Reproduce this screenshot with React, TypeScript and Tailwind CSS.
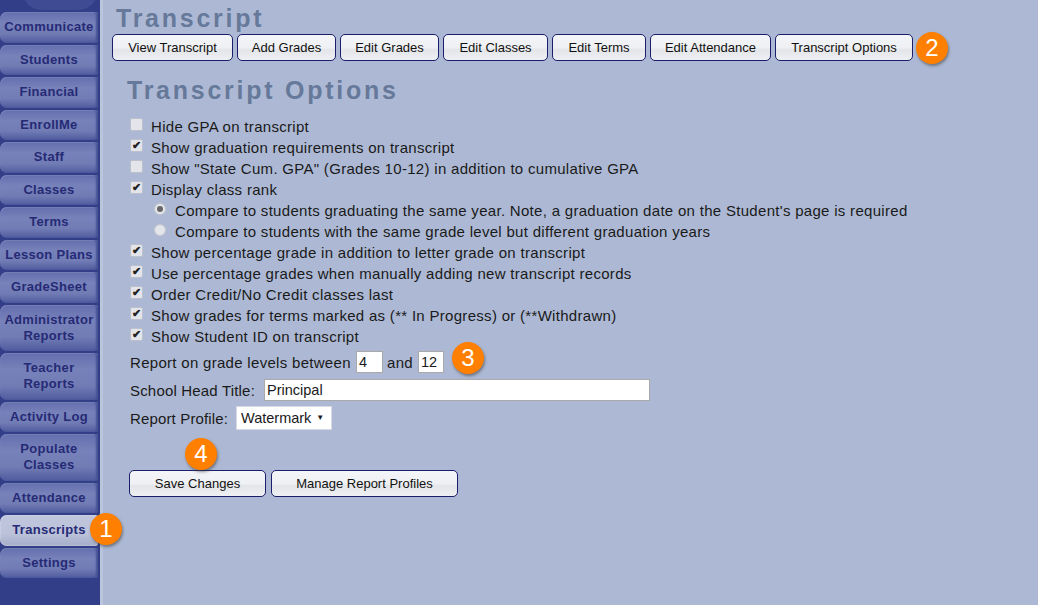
const sideItems: { label: string[]; active?: boolean }[] = [
  { label: ["Communicate"] },
  { label: ["Students"] },
  { label: ["Financial"] },
  { label: ["EnrollMe"] },
  { label: ["Staff"] },
  { label: ["Classes"] },
  { label: ["Terms"] },
  { label: ["Lesson Plans"] },
  { label: ["GradeSheet"] },
  { label: ["Administrator", "Reports"] },
  { label: ["Teacher", "Reports"] },
  { label: ["Activity Log"] },
  { label: ["Populate", "Classes"] },
  { label: ["Attendance"] },
  { label: ["Transcripts"], active: true },
  { label: ["Settings"] },
];

const tabs: [string, string][] = [
  ["View Transcript", "w-[121px]"],
  ["Add Grades", "w-[99px]"],
  ["Edit Grades", "w-[99px]"],
  ["Edit Classes", "w-[105px]"],
  ["Edit Terms", "w-[94px]"],
  ["Edit Attendance", "w-[121px]"],
  ["Transcript Options", "w-[138px]"],
];

function Badge({ n, className }: { n: string; className: string }) {
  return (
    <span
      className={`absolute flex h-[32px] w-[32px] items-center justify-center rounded-full bg-[#ff7f00] text-[24px] leading-none text-white shadow-[1px_2px_3px_rgba(60,60,60,0.55)] ${className}`}
    >
      {n}
    </span>
  );
}

function Btn({ label, className }: { label: string; className: string }) {
  return (
    <button
      className={`h-[27px] rounded-[5px] border border-[#1b1f6b] bg-[linear-gradient(#f4f5f8_0%,#eff0f3_50%,#e3e5e8_60%,#eff0f3_100%)] text-center text-[13px] leading-none text-[#111] ${className}`}
    >
      {label}
    </button>
  );
}

function Check({ on, label }: { on?: boolean; label: string }) {
  return (
    <div className="flex h-[21px] items-center">
      <span className="flex h-[13px] w-[13px] -translate-y-[2px] items-center justify-center rounded-[2px] border border-[#bcc1cc] bg-[#e3e5ea] text-[11px] font-bold leading-none text-[#222]">
        {on ? "✔" : ""}
      </span>
      <span className="ml-[8px]">{label}</span>
    </div>
  );
}

function Radio({ on, label }: { on?: boolean; label: string }) {
  return (
    <div className="flex h-[21px] items-center pl-[24px]">
      <span className="flex h-[12px] w-[12px] -translate-y-[2px] items-center justify-center rounded-full border border-[#c4c8d0] bg-[#e3e5ea]">
        {on ? <span className="h-[6px] w-[6px] rounded-full bg-[#666]" /> : null}
      </span>
      <span className="ml-[9px]">{label}</span>
    </div>
  );
}

export default function App() {
  return (
    <div className="relative flex h-[605px] w-[1038px] overflow-hidden bg-[#adb9d4] font-['Liberation_Sans',Arial,sans-serif]">
      <aside className="relative h-full w-[100px] shrink-0 bg-[#323e87] pt-[12px] pr-[2px]">
        <div className="absolute left-[22px] top-[-30px] h-[40px] w-[76px] rounded-full bg-[#3f4b92]" />
        <div className="relative flex flex-col">
          {sideItems.map((it) => (
            <div
              key={it.label[0]}
              className={`mb-[2px] flex flex-col items-center justify-center rounded-l-[7px] rounded-r-[3px] text-center text-[13px] font-bold leading-[16px] tracking-[0.3px] text-[#262a75] ${
                it.label.length > 1 ? "h-[46.5px]" : "h-[30.5px]"
              } ${
                it.active
                  ? "bg-[linear-gradient(#c0c6dc_0%,#bbc2da_60%,#a5acc9_100%)] shadow-[inset_0_0_2px_#e5e8f2]"
                  : "bg-[linear-gradient(#636eae_0%,#7782ba_35%,#717cb5_70%,#4f5b9e_100%)] shadow-[inset_-2px_0_2px_#465194,inset_0_1px_1px_#8791c3]"
              }`}
            >
              {it.label.map((l) => (
                <span key={l}>{l}</span>
              ))}
            </div>
          ))}
        </div>
      </aside>

      <main className="relative flex-1 border-l-[3px] border-l-[#bac4da] pl-[9px] text-[15px] leading-[21px] tracking-[0.3px] text-[#1a1a1a]">
        <h1 className="mt-[3px] h-[31px] pl-[4px] text-[25px] font-bold leading-[31px] tracking-[2.75px] text-[#66799a]">
          Transcript
        </h1>
        <div className="flex gap-[4px] tracking-normal">
          {tabs.map(([t, w]) => (
            <Btn key={t} label={t} className={w} />
          ))}
        </div>

        <h2 className="mt-[13px] h-[32px] pl-[15px] text-[25px] font-bold leading-[32px] tracking-[2.75px] text-[#66799a]">
          Transcript Options
        </h2>

        <div className="mt-[10px] pl-[18px]">
          <Check label="Hide GPA on transcript" />
          <Check on label="Show graduation requirements on transcript" />
          <Check label={'Show "State Cum. GPA" (Grades 10-12) in addition to cumulative GPA'} />
          <Check on label="Display class rank" />
          <Radio on label="Compare to students graduating the same year. Note, a graduation date on the Student's page is required" />
          <Radio label="Compare to students with the same grade level but different graduation years" />
          <Check on label="Show percentage grade in addition to letter grade on transcript" />
          <Check on label="Use percentage grades when manually adding new transcript records" />
          <Check on label="Order Credit/No Credit classes last" />
          <Check on label="Show grades for terms marked as (** In Progress) or (**Withdrawn)" />
          <Check on label="Show Student ID on transcript" />

          <div className="mt-[4px] flex h-[22px] items-center">
            <span className="w-[226px]">Report on grade levels between</span>
            <span className="flex h-[22px] w-[27px] items-center border border-[#a9a9a9] bg-white pl-[2px] text-[14.5px] tracking-normal">4</span>
            <span className="ml-[4px] w-[31px]">and</span>
            <span className="flex h-[22px] w-[26px] items-center border border-[#a9a9a9] bg-white pl-[2px] text-[14.5px] tracking-normal">12</span>
          </div>
          <div className="mt-[6px] flex h-[22px] items-center">
            <span className="w-[134px] tracking-[0.18px]">School Head Title:</span>
            <span className="flex h-[22px] w-[386px] items-center border border-[#a9a9a9] bg-white pl-[2px] text-[14.5px] tracking-normal">Principal</span>
          </div>
          <div className="mt-[5px] flex h-[24px] items-center">
            <span className="w-[106px] tracking-[0.15px]">Report Profile:</span>
            <span className="flex h-[24px] w-[96px] items-center border border-[#d5d9e3] bg-white pl-[4px] text-[14.5px] tracking-normal">
              Watermark
              <span className="ml-[5px] text-[8px] leading-none">▼</span>
            </span>
          </div>
          <div className="ml-[-1px] mt-[40px] flex gap-[5px] tracking-normal">
            <Btn label="Save Changes" className="w-[137px]" />
            <Btn label="Manage Report Profiles" className="w-[187px]" />
          </div>
        </div>
      </main>

      <Badge n="1" className="left-[90px] top-[513px]" />
      <Badge n="2" className="left-[916px] top-[32px]" />
      <Badge n="3" className="left-[452px] top-[342px]" />
      <Badge n="4" className="left-[185px] top-[438px]" />
    </div>
  );
}
